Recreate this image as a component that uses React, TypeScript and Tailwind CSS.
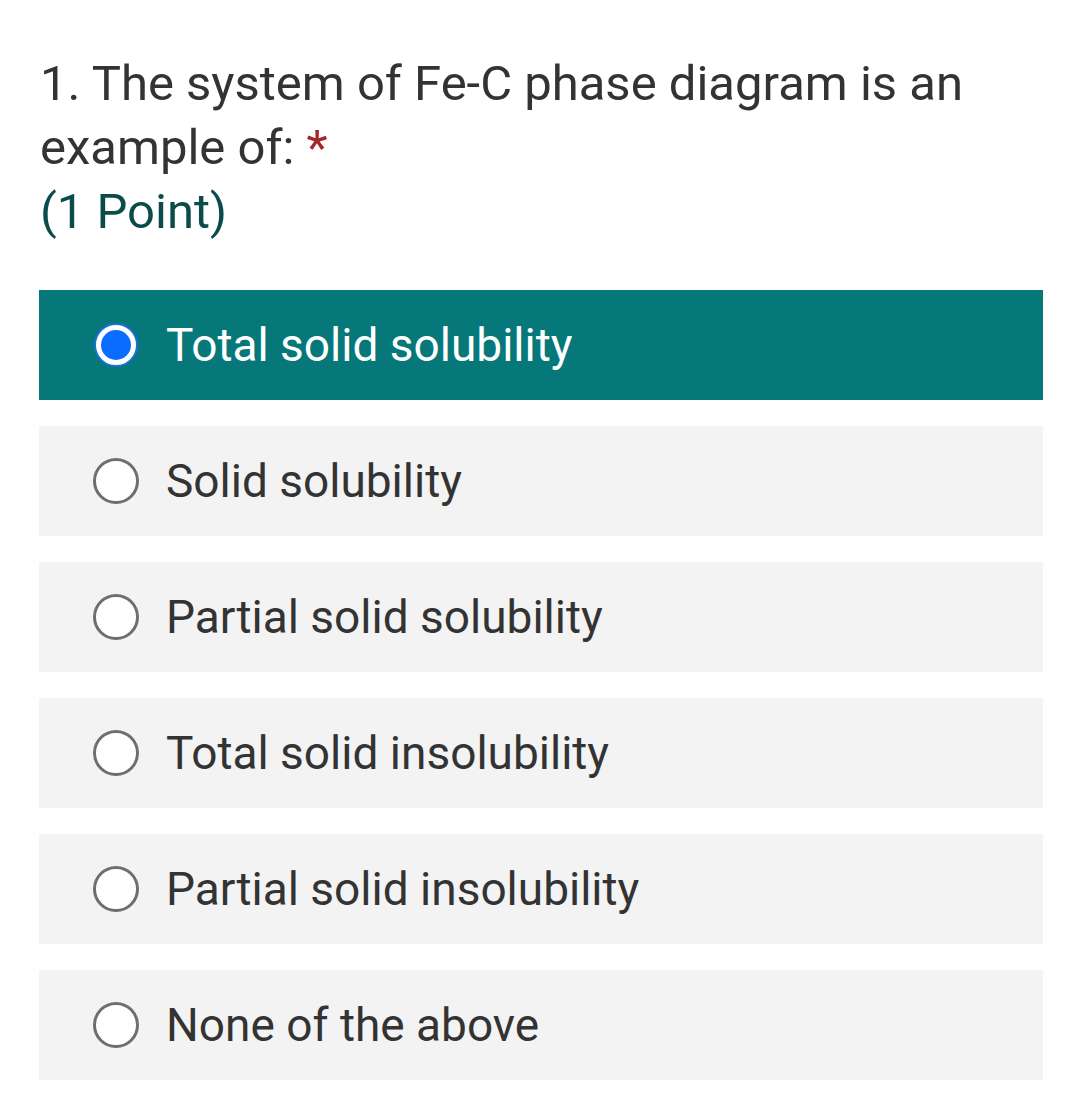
import React, { useState } from "react";

const options = [
  "Total solid solubility",
  "Solid solubility",
  "Partial solid solubility",
  "Total solid insolubility",
  "Partial solid insolubility",
  "None of the above",
];

export default function App() {
  const [selected, setSelected] = useState(0);

  return (
    <div className="min-h-screen bg-white pt-[52px] pl-[39px] pr-[37px] font-['Roboto',sans-serif]">
      {/* Question */}
      <div className="pl-[1px] text-[49px] leading-[64px] text-[#333333]">
        1. The system of Fe-C phase diagram is an example of:{" "}
        <span className="text-[#a4262c]">*</span>
      </div>
      <div className="pl-[1px] text-[49px] leading-[64px] text-[#0b4b4a]">(1 Point)</div>

      {/* Options */}
      <div className="mt-[46px] flex flex-col gap-[26px]">
        {options.map((label, i) => {
          const active = i === selected;
          return (
            <button
              key={label}
              onClick={() => setSelected(i)}
              className={`flex h-[110px] w-full items-center text-left ${
                active ? "bg-[#06787a]" : "bg-[#f3f3f3]"
              }`}
            >
              <span className="ml-[54px] flex h-[46px] w-[46px] items-center justify-center">
                {active ? (
                  <span className="flex h-[44px] w-[44px] items-center justify-center rounded-full border-[2px] border-[#1a6fd8] bg-white">
                    <span className="h-[30px] w-[30px] rounded-full bg-[#0a6cff]" />
                  </span>
                ) : (
                  <span className="h-[46px] w-[46px] rounded-full border-[3px] border-[#6e6e6e] bg-white" />
                )}
              </span>
              <span
                className={`ml-[27px] text-[46px] ${
                  active ? "text-white" : "text-[#333333]"
                }`}
              >
                {label}
              </span>
            </button>
          );
        })}
      </div>
    </div>
  );
}
